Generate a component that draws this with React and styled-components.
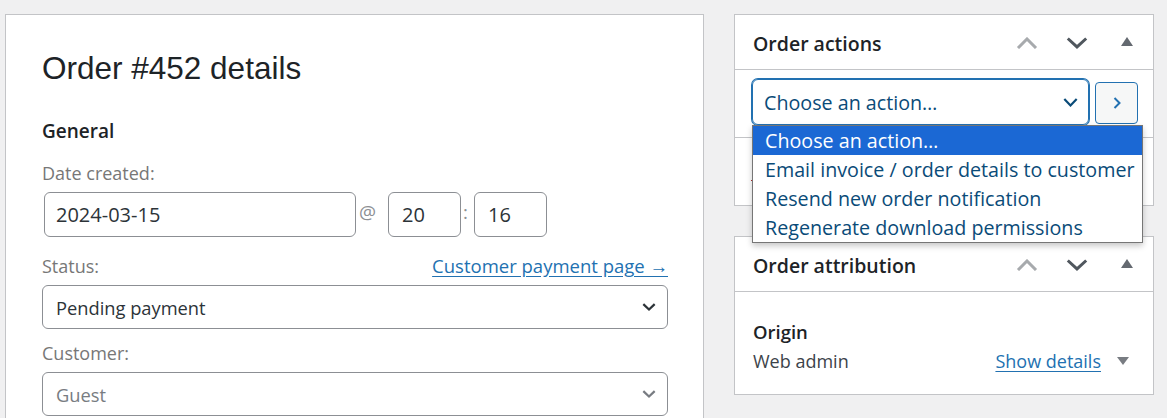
import React from 'react';
import styled, { createGlobalStyle } from 'styled-components';

const GlobalStyle = createGlobalStyle`
  body {
    margin: 0;
    background: #f0f0f1;
    font-family: 'Open Sans', 'Noto Sans', sans-serif;
    color: #3c434a;
  }
`;

const Page = styled.div`
  display: flex;
  align-items: flex-start;
  gap: 30px;
  height: 418px;
  box-sizing: border-box;
  padding: 14px 13px 0 5px;
  overflow: hidden;
`;

const MainPanel = styled.section`
  flex: 0 0 699px;
  box-sizing: border-box;
  height: 440px;
  background: #fff;
  border: 1px solid #c3c4c7;
  padding: 34px 35px 0 36px;
`;

const Heading = styled.h2`
  margin: 0;
  font-family: 'Liberation Sans', Arial, sans-serif;
  font-size: 31.5px;
  font-weight: 400;
  line-height: 38px;
  color: #1d2327;
`;

const SectionTitle = styled.h3`
  margin: 31px 0 0;
  font-size: 19px;
  font-weight: 600;
  line-height: 26px;
  color: #1d2327;
`;

const Field = styled.div`
  display: flex;
  flex-direction: column;
  gap: 7px;
  margin-top: ${(p) => p.$top}px;
`;

const LabelRow = styled.div`
  display: flex;
  justify-content: space-between;
  align-items: baseline;
  font-size: 18px;
  line-height: 24px;
`;

const Label = styled.span`
  color: #777;
`;

const Link = styled.a`
  color: #2271b1;
  text-decoration: underline;
  text-underline-offset: 3px;
  font-size: ${(p) => p.$size || 18}px;
  cursor: pointer;
`;

const DateRow = styled.div`
  display: flex;
  align-items: center;
  height: 45px;
`;

const TextBox = styled.div`
  box-sizing: border-box;
  display: flex;
  align-items: center;
  width: ${(p) => p.$width}px;
  height: 45px;
  margin-left: ${(p) => p.$offset || 0}px;
  padding-left: ${(p) => p.$pad || 11}px;
  border: 1px solid #8c8f94;
  border-radius: 6px;
  font-size: 20px;
  color: #2c3338;
`;

const Separator = styled.span`
  box-sizing: border-box;
  width: ${(p) => p.$width}px;
  padding-left: ${(p) => p.$pad}px;
  margin-top: -4px;
  font-size: ${(p) => p.$size || 18.5}px;
  line-height: 1;
  color: #8c8f94;
`;

const SelectBox = styled.div`
  box-sizing: border-box;
  display: flex;
  align-items: center;
  justify-content: space-between;
  height: 44px;
  padding: 0 11px 0 13px;
  border: 1px solid #8c8f94;
  border-radius: 6px;
  font-size: 18.3px;
  color: ${(p) => (p.$muted ? '#787c82' : '#2c3338')};
`;

const Sidebar = styled.div`
  flex: 0 0 420px;
  display: flex;
  flex-direction: column;
  gap: 30px;
`;

const Postbox = styled.div`
  background: #fff;
  border: 1px solid #c3c4c7;
`;

const PostboxHeader = styled.div`
  display: flex;
  align-items: flex-start;
  justify-content: space-between;
  height: 54px;
  padding: 0 1px 0 18px;
  border-bottom: 1px solid #c3c4c7;
`;

const PostboxTitle = styled.h2`
  margin: 16px 0 0;
  font-size: 19.5px;
  font-weight: 600;
  line-height: 26px;
  color: #1d2327;
`;

const HandleGroup = styled.div`
  display: flex;
`;

const HandleButton = styled.button`
  display: flex;
  justify-content: center;
  align-items: flex-start;
  width: 50px;
  height: 54px;
  padding: 22px 0 0;
  border: 0;
  background: none;
  color: ${(p) => p.$color};
  cursor: pointer;
`;

const ActionsBody = styled.div`
  display: flex;
  align-items: flex-start;
  gap: 6px;
  padding: 9px 15px 12px 17px;
`;

const SelectWrap = styled.div`
  position: relative;
  flex: 1;
`;

const ActionSelect = styled.div`
  box-sizing: border-box;
  display: flex;
  align-items: center;
  justify-content: space-between;
  height: 46px;
  padding: 0 10px 0 11px;
  border: 1px solid #2271b1;
  border-radius: 6px;
  box-shadow: 0 0 0 1px #2271b1;
  font-size: 19.7px;
  color: #0a4b78;
`;

const GoButton = styled.button`
  display: flex;
  align-items: center;
  justify-content: center;
  width: 43px;
  height: 42px;
  margin-top: 3px;
  padding: 0;
  border: 1px solid #2271b1;
  border-radius: 4px;
  background: #f6f7f7;
  color: #2271b1;
  cursor: pointer;
`;

/* the open native option list lies over the panels below it */
const Dropdown = styled.ul`
  position: absolute;
  top: 100%;
  left: 0;
  z-index: 10;
  width: 391px;
  box-sizing: border-box;
  margin: 0;
  padding: 0;
  list-style: none;
  background: #fff;
  border: 1px solid #767676;
  box-shadow: 0 3px 6px rgba(0, 0, 0, 0.22);
`;

const Option = styled.li`
  height: 29px;
  padding-left: 12px;
  font-size: 19.7px;
  line-height: 30px;
  white-space: nowrap;
  color: ${(p) => (p.$active ? '#fff' : '#0a4b78')};
  background: ${(p) => (p.$active ? '#1b68d4' : 'transparent')};
`;

const ActionsFooter = styled.div`
  display: flex;
  align-items: center;
  height: 67px;
  padding: 0 15px 0 16px;
  border-top: 1px solid #c3c4c7;
`;

const TrashLink = styled.a`
  color: #b32d2e;
  font-size: 18px;
  text-decoration: underline;
`;

const AttributionBody = styled.div`
  padding: 27px 24px 20px 18px;
`;

const Term = styled.div`
  font-size: 18.5px;
  font-weight: 600;
  line-height: 25px;
  color: #1d2327;
`;

const ValueRow = styled.div`
  display: flex;
  align-items: center;
  justify-content: space-between;
  margin-top: 4px;
  font-size: 18px;
  line-height: 26px;
`;

const DetailsToggle = styled.div`
  display: flex;
  align-items: center;
  gap: 16px;
  color: #787c82;
`;

const ChevronUp = () => (
  <svg width="22" height="12" viewBox="0 0 22 12" fill="none">
    <path d="M2 11 L11 2 L20 11" stroke="currentColor" strokeWidth="3" />
  </svg>
);

const ChevronDown = ({ w = 22, h = 12, sw = 3 }) => (
  <svg width={w} height={h} viewBox={`0 0 ${w} ${h}`} fill="none">
    <path
      d={`M${sw * 0.6} ${sw * 0.5} L${w / 2} ${h - sw * 0.7} L${w - sw * 0.6} ${sw * 0.5}`}
      stroke="currentColor"
      strokeWidth={sw}
    />
  </svg>
);

const TriangleUp = () => (
  <svg width="12" height="9" viewBox="0 0 12 9">
    <path d="M0 9 L6 0 L12 9 Z" fill="currentColor" />
  </svg>
);

const TriangleDown = () => (
  <svg width="12" height="8" viewBox="0 0 12 8">
    <path d="M0 0 L12 0 L6 8 Z" fill="currentColor" />
  </svg>
);

const ChevronRight = () => (
  <svg width="8" height="12" viewBox="0 0 8 12" fill="none">
    <path d="M1.5 1 L6.5 6 L1.5 11" stroke="currentColor" strokeWidth="2" />
  </svg>
);

const PostboxHandles = () => (
  <HandleGroup>
    <HandleButton $color="#a7aaad">
      <ChevronUp />
    </HandleButton>
    <HandleButton $color="#50575e">
      <ChevronDown />
    </HandleButton>
    <HandleButton $color="#646970">
      <TriangleUp />
    </HandleButton>
  </HandleGroup>
);

const actions = [
  'Choose an action…',
  'Email invoice / order details to customer',
  'Resend new order notification',
  'Regenerate download permissions',
];

export default function App() {
  return (
    <>
      <GlobalStyle />
      <Page>
        <MainPanel>
          <Heading>Order #452 details</Heading>
          <SectionTitle>General</SectionTitle>

          <Field $top={17}>
            <LabelRow>
              <Label>Date created:</Label>
            </LabelRow>
            <DateRow>
              <TextBox $width={312} $offset={2}>2024-03-15</TextBox>
              <Separator $width={32} $pad={3} $size={19}>@</Separator>
              <TextBox $width={73} $pad={13}>20</TextBox>
              <Separator $width={13} $pad={2}>:</Separator>
              <TextBox $width={73} $pad={13}>16</TextBox>
            </DateRow>
          </Field>

          <Field $top={17}>
            <LabelRow>
              <Label>Status:</Label>
              <Link $size={18.5}>Customer payment page →</Link>
            </LabelRow>
            <SelectBox>
              Pending payment
              <ChevronDown w={14} h={8} sw={2.2} />
            </SelectBox>
          </Field>

          <Field $top={12}>
            <LabelRow>
              <Label>Customer:</Label>
            </LabelRow>
            <SelectBox $muted>
              Guest
              <ChevronDown w={14} h={8} sw={2.2} />
            </SelectBox>
          </Field>
        </MainPanel>

        <Sidebar>
          <Postbox>
            <PostboxHeader>
              <PostboxTitle>Order actions</PostboxTitle>
              <PostboxHandles />
            </PostboxHeader>
            <ActionsBody>
              <SelectWrap>
                <ActionSelect>
                  Choose an action…
                  <ChevronDown w={15} h={9} sw={2.2} />
                </ActionSelect>
                <Dropdown>
                  {actions.map((a, i) => (
                    <Option key={a} $active={i === 0}>
                      {a}
                    </Option>
                  ))}
                </Dropdown>
              </SelectWrap>
              <GoButton>
                <ChevronRight />
              </GoButton>
            </ActionsBody>
            <ActionsFooter>
              <TrashLink>Move to Trash</TrashLink>
            </ActionsFooter>
          </Postbox>

          <Postbox>
            <PostboxHeader>
              <PostboxTitle>Order attribution</PostboxTitle>
              <PostboxHandles />
            </PostboxHeader>
            <AttributionBody>
              <Term>Origin</Term>
              <ValueRow>
                Web admin
                <DetailsToggle>
                  <Link>Show details</Link>
                  <TriangleDown />
                </DetailsToggle>
              </ValueRow>
            </AttributionBody>
          </Postbox>
        </Sidebar>
      </Page>
    </>
  );
}
